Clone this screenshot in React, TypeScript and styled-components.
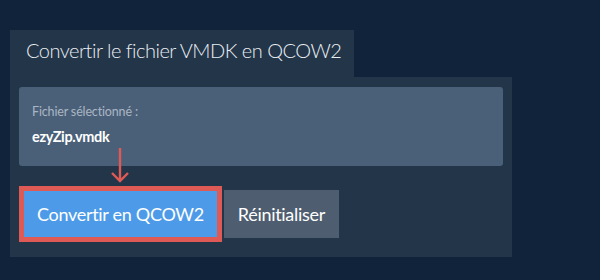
import styled, { createGlobalStyle } from 'styled-components';

const GlobalStyle = createGlobalStyle`
  html, body {
    margin: 0;
    padding: 0;
    background: #11233a;
    font-family: Lato, "Open Sans", sans-serif;
  }
`;

function App() {
  return (
    <Page>
      <GlobalStyle />
      <Tab>Convertir le fichier VMDK en QCOW2</Tab>
      <Panel>
        <FileBox>
          <FileLabel>Fichier sélectionné :</FileLabel>
          <FileName>ezyZip.vmdk</FileName>
        </FileBox>
        <Actions>
          <Arrow width="20" height="36" viewBox="0 0 20 36">
            <path d="M10 0 V33 M2 25 L10 33 L18 25" fill="none" stroke="#e05a55" strokeWidth="2.4" />
          </Arrow>
          <Button $variant="primary">Convertir en QCOW2</Button>
          <Button>Réinitialiser</Button>
        </Actions>
      </Panel>
    </Page>
  );
}

export default App;

const Page = styled.div`
  width: 600px;
  height: 280px;
  padding: 30px 0 0 10px;
  box-sizing: border-box;
  background: #11233a;
`;

const Tab = styled.div`
  display: inline-block;
  width: 344px;
  height: 47px;
  box-sizing: border-box;
  padding: 8px 0 0 16px;
  background: #223549;
  color: #eaeef2;
  font-size: 20px;
  font-weight: 300;
  letter-spacing: -0.5px;
  white-space: nowrap;
  vertical-align: top;
`;

const Panel = styled.div`
  width: 502px;
  box-sizing: border-box;
  padding: 10px 9px 10px;
  background: #223549;
`;

const FileBox = styled.div`
  height: 79px;
  box-sizing: border-box;
  padding: 17px 13px 0;
  background: #4a6079;
  border-radius: 3px;
`;

const FileLabel = styled.div`
  color: #aab6c3;
  font-size: 12.5px;
  letter-spacing: -0.15px;
  line-height: 16px;
`;

const FileName = styled.div`
  margin-top: 8px;
  color: #ffffff;
  font-size: 14.5px;
  font-weight: 700;
  letter-spacing: -0.35px;
  line-height: 18px;
`;

const Actions = styled.div`
  position: relative;
  display: flex;
  align-items: center;
  gap: 2px;
  padding: 20px 0 5px 0;
`;

const Arrow = styled.svg`
  position: absolute;
  left: 91px;
  top: -18px;
`;

const Button = styled.button<{ $variant?: 'primary' }>`
  height: ${p => (p.$variant === 'primary' ? '56px' : '48px')};
  box-sizing: border-box;
  padding: 0 ${p => (p.$variant === 'primary' ? '13px' : '14px')};
  border: ${p => (p.$variant === 'primary' ? '5px solid #e05a55' : 'none')};
  border-radius: 0;
  background: ${p => (p.$variant === 'primary' ? '#4d9be8' : '#4e5e70')};
  color: #ffffff;
  font-family: Lato, "Open Sans", sans-serif;
  font-size: 18px;
  font-weight: 400;
  letter-spacing: -0.3px;
  white-space: nowrap;
  cursor: pointer;
`;
